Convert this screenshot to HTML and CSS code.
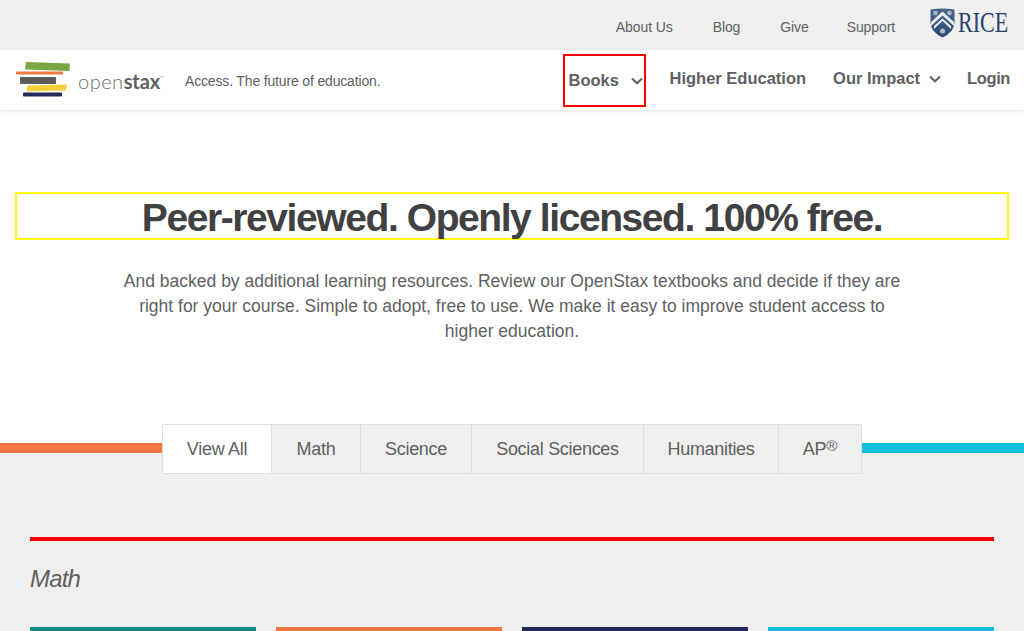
FILE: index.html
```html
<!DOCTYPE html>
<html lang="en">
<head>
<meta charset="utf-8">
<title>OpenStax Books</title>
<link rel="stylesheet" href="styles.css">
</head>
<body>
<header>
  <div class="meta-bar">
    <a class="meta-link" href="#">About Us</a>
    <a class="meta-link" href="#">Blog</a>
    <a class="meta-link" href="#">Give</a>
    <a class="meta-link" href="#">Support</a>
    <a class="rice" href="#">
      <svg class="rice-shield" width="25" height="30" viewBox="0 0 25 30">
        <defs>
          <linearGradient id="shield" x1="0" y1="0" x2="0" y2="1">
            <stop offset="0" stop-color="#47688f"/>
            <stop offset="1" stop-color="#2a4a74"/>
          </linearGradient>
        </defs>
        <path d="M.5 1.500 Q12 -.5 24.500 1.500 L24.500 15 Q24 24 12.500 29.500 Q1 24 .5 15Z" fill="url(#shield)"/>
        <path d="M1 18 L12.500 7.500 L24 18 L24 14 L12.500 3.500 L1 14Z" fill="#e9edf1"/>
        <path d="M4 21 L12.500 13 L21 21 L21 18 L12.500 10.500 L4 18Z" fill="#e9edf1"/>
        <circle cx="5.500" cy="5" r="2.300" fill="#aeb5be"/>
        <circle cx="19.500" cy="5" r="2.300" fill="#aeb5be"/>
        <circle cx="12.500" cy="23" r="2.500" fill="#b8bec6"/>
      </svg>
      <span class="rice-word">RICE</span>
    </a>
  </div>
  <nav class="main-nav">
    <a class="brand" href="#">
      <svg class="brand-mark" width="56" height="36" viewBox="0 0 56 36">
        <path d="M11 0 L55 1.500 L54.500 9 L10 7.500Z" fill="#78a841"/>
        <path d="M1 9.500 L48 9.500 L48 12.500 L1 12.500Z" fill="#f47641"/>
        <rect x="5" y="15" width="36" height="7" rx="1" fill="#5c5c5a"/>
        <path d="M12.500 23.500 L52 22.500 L51 28.500 L11.500 29.500Z" fill="#f4d03f"/>
        <rect x="8" y="30.500" width="39" height="4" rx="1" fill="#232a5c"/>
      </svg>
      <span class="brand-name">open<b>stax</b><sup class="tm">™</sup></span>
      <span class="tagline">Access. The future of education.</span>
    </a>
    <div class="nav-items">
      <a class="nav-item nav-books" href="#">Books
        <svg class="chev" width="12" height="8" viewBox="0 0 12 8"><path d="M1 1.500 L6 6.300 L11 1.500" fill="none" stroke="#5f6062" stroke-width="2"/></svg>
      </a>
      <a class="nav-item nav-higher" href="#">Higher Education</a>
      <a class="nav-item nav-impact" href="#">Our Impact
        <svg class="chev" width="12" height="8" viewBox="0 0 12 8"><path d="M1 1.500 L6 6.300 L11 1.500" fill="none" stroke="#5f6062" stroke-width="2"/></svg>
      </a>
      <a class="nav-item nav-login" href="#">Login</a>
    </div>
  </nav>
</header>
<main>
  <section class="hero">
    <h1 class="headline">Peer-reviewed. Openly licensed. 100% free.</h1>
    <p class="intro">And backed by additional learning resources. Review our OpenStax textbooks and decide if they are right for your course. Simple to adopt, free to use. We make it easy to improve student access to higher education.</p>
  </section>
  <section class="filter-row">
    <div class="tabs">
      <a class="tab tab-active" href="#">View All</a>
      <a class="tab" href="#">Math</a>
      <a class="tab" href="#">Science</a>
      <a class="tab" href="#">Social Sciences</a>
      <a class="tab" href="#">Humanities</a>
      <a class="tab" href="#">AP<sup class="reg">®</sup></a>
    </div>
  </section>
  <section class="catalog">
    <div class="rule"></div>
    <h2 class="subject">Math</h2>
    <div class="cards">
      <div class="card card-teal"></div>
      <div class="card card-orange"></div>
      <div class="card card-navy"></div>
      <div class="card card-cyan"></div>
    </div>
  </section>
</main>
</body>
</html>
```
FILE: styles.css
```css
* { box-sizing: border-box; }
html, body { margin: 0; height: 631px; overflow: hidden; }
body { font-family: "Liberation Sans", Arial, sans-serif; color: #5f6062; background: #fff; }
a { color: inherit; text-decoration: none; }

.meta-bar {
  height: 50px;
  background: #efefef;
  display: flex;
  align-items: center;
  justify-content: flex-end;
  padding: 4px 14px 0 0;
  font-size: 14px;
}
.meta-link { margin-right: 40px; letter-spacing: -.1px; }
.meta-link:nth-child(3) { margin-right: 38px; }
.meta-link:nth-child(4) { margin-right: 35px; }
.rice { display: flex; align-items: center; margin-top: -9px; }
.rice-word {
  display: inline-block;
  width: 52px;
  margin-left: 3px;
  font-family: "Liberation Serif", serif;
  font-size: 29px;
  color: #27466f;
  transform: scaleX(.76);
  transform-origin: left center;
}

.main-nav {
  height: 60px;
  background: #fff;
  display: flex;
  align-items: center;
  justify-content: space-between;
  padding: 0 14px 0 15px;
  box-shadow: 0 1px 3px rgba(0,0,0,.12);
  position: relative;
}
.brand { display: flex; align-items: center; }
.brand-name {
  font-family: Lato, "Liberation Sans", sans-serif;
  font-weight: 300;
  font-size: 20px;
  margin-left: 7px;
  letter-spacing: .5px;
  color: #6a6b6d;
  width: 107px;
  margin-top: 1px;
}
.brand-name b { color: #5f6062; font-weight: 700; letter-spacing: -.1px; }
.tm { font-size: 6px; vertical-align: 9px; line-height: 0; }
.tagline { font-size: 14px; letter-spacing: -.16px; margin-top: 1px; }

.nav-items { display: flex; align-items: center; font-size: 16.500px; font-weight: 700; }
.nav-item { display: flex; align-items: center; white-space: nowrap; }
.nav-books {
  width: 83px;
  height: 53px;
  border: 2px solid #f00;
  padding: 0 1px 0 3px;
  justify-content: space-between;
  margin-right: 23px;
}
.nav-books .chev { margin-top: 2px; }
.nav-higher { margin-top: -3px; margin-right: 27px; }
.nav-impact { margin-top: -3px; margin-right: 26px; gap: 9px; letter-spacing: -.01px; }
.nav-login { margin-top: -3px; letter-spacing: -.4px; }

.hero { padding-top: 82px; display: flex; flex-direction: column; align-items: center; }
.headline {
  margin: 0;
  width: 994px;
  height: 48px;
  border: 2px solid #ff0;
  padding-top: 2px;
  color: #414042;
  text-align: center;
  font-size: 39px;
  line-height: 44px;
  letter-spacing: -1.420px;
  font-weight: 700;
}
.intro {
  margin: 29px 0 0;
  width: 790px;
  text-align: center;
  font-size: 17.500px;
  line-height: 25px;
}

.filter-row {
  margin-top: 80px;
  display: flex;
  justify-content: center;
  height: 50px;
  background: linear-gradient(to bottom, #fff 29px, #efefef 29px);
  position: relative;
}
.filter-row::before {
  content: "";
  position: absolute;
  left: 0; right: 0; top: 19px; height: 10px;
  background: linear-gradient(to right, #f47641 0 50%, #0dc0dc 50% 100%);
}
.tabs {
  display: grid;
  grid-template-columns: 109px 89px 111px 172px 135px 82px;
  position: relative;
  width: 700px;
  height: 50px;
  border: 1px solid #dfdfdf;
  background: #efefef;
}
.tab {
  display: flex;
  align-items: center;
  justify-content: center;
  font-size: 18px;
  border-right: 1px solid #dfdfdf;
  letter-spacing: -.3px;
}
.tab:last-child { border-right: 0; }
.tab-active { background: #fff; }
.reg { font-size: 15px; line-height: 1; margin-top: -7px; letter-spacing: 0; }

.catalog { background: #efefef; height: 160px; padding: 63px 30px 0; }
.rule { height: 4px; background: #f00; }
.subject { margin: 23px 0 0; font-size: 24px; line-height: 30px; font-weight: 400; font-style: italic; letter-spacing: -.8px; }
.cards { display: grid; grid-template-columns: repeat(4, 226px); gap: 20px; margin-top: 33px; }
.card { height: 20px; border-top: 4px solid; background: #fff; }
.card-teal { border-color: #0c9082; }
.card-orange { border-color: #f47641; }
.card-navy { border-color: #232a5c; }
.card-cyan { border-color: #0dc0dc; }
```
